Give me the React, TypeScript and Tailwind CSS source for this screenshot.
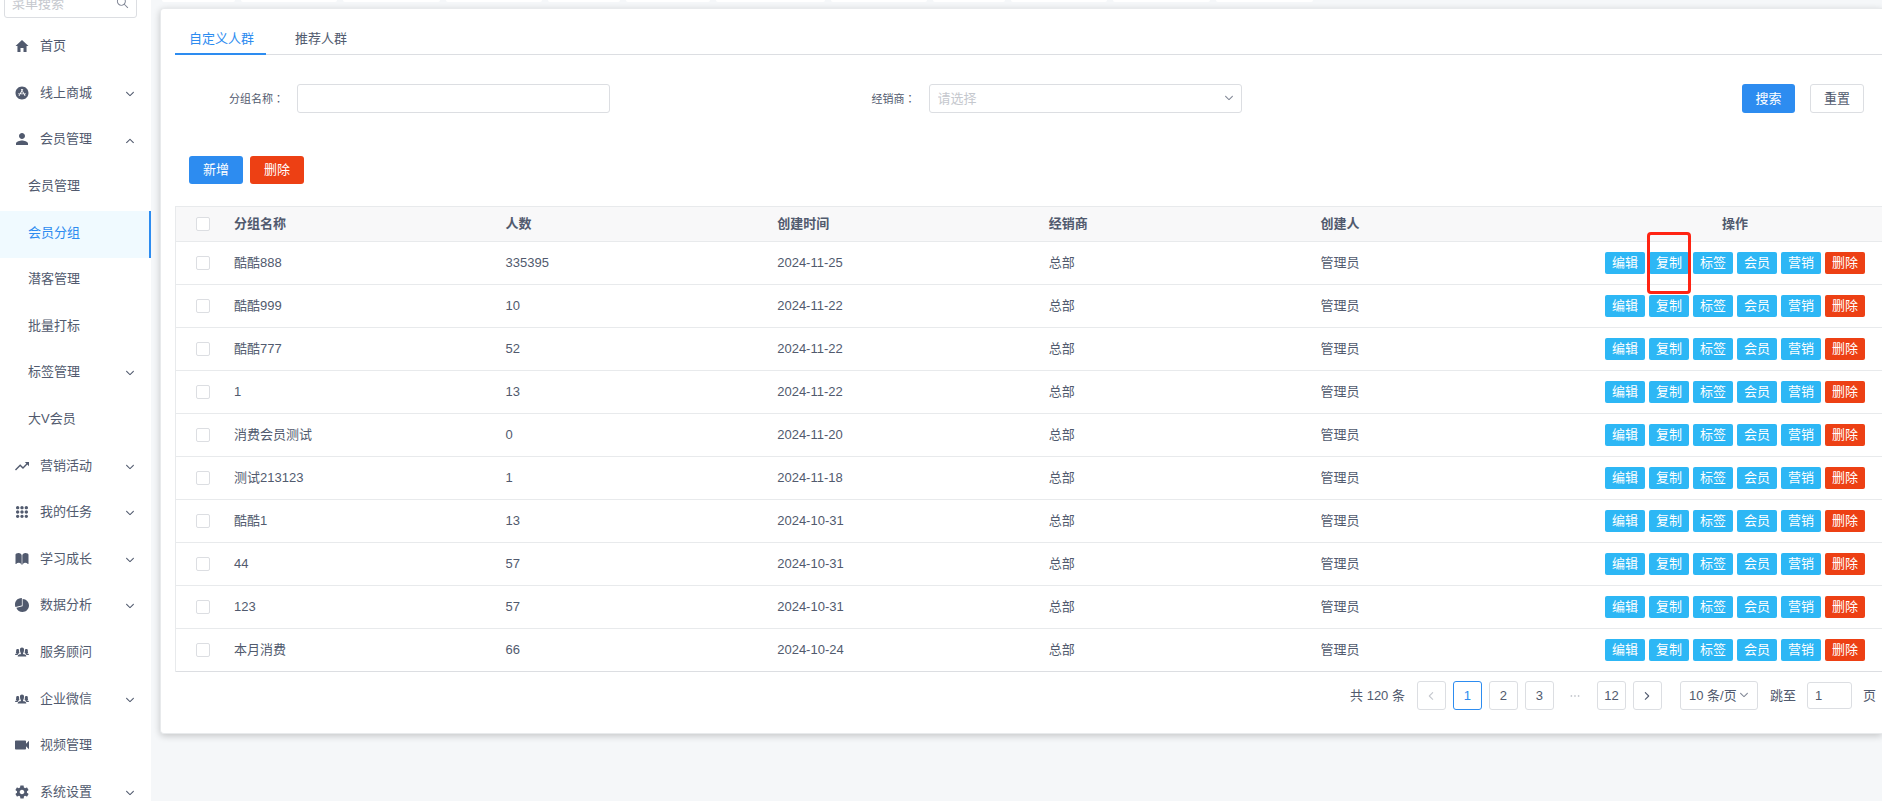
import { useState } from 'react';
import type { IconType } from 'react-icons';
import {
  IoIosAppstore,
  IoIosArrowBack,
  IoIosArrowDown,
  IoIosArrowForward,
  IoIosArrowUp,
  IoIosBook,
  IoIosKeypad,
  IoIosMore,
  IoIosPeople,
  IoIosPie,
  IoIosSearch,
  IoMdHome,
  IoMdPerson,
  IoMdSettings,
  IoMdTrendingUp,
  IoMdVideocam,
} from 'react-icons/io';

type MenuItem = {
  label: string;
  icon?: IconType;
  arrow?: 'up' | 'down';
  active?: boolean;
};

const menuItems: MenuItem[] = [
  { label: '首页', icon: IoMdHome },
  { label: '线上商城', icon: IoIosAppstore, arrow: 'down' },
  { label: '会员管理', icon: IoMdPerson, arrow: 'up' },
  { label: '会员管理' },
  { label: '会员分组', active: true },
  { label: '潜客管理' },
  { label: '批量打标' },
  { label: '标签管理', arrow: 'down' },
  { label: '大V会员' },
  { label: '营销活动', icon: IoMdTrendingUp, arrow: 'down' },
  { label: '我的任务', icon: IoIosKeypad, arrow: 'down' },
  { label: '学习成长', icon: IoIosBook, arrow: 'down' },
  { label: '数据分析', icon: IoIosPie, arrow: 'down' },
  { label: '服务顾问', icon: IoIosPeople },
  { label: '企业微信', icon: IoIosPeople, arrow: 'down' },
  { label: '视频管理', icon: IoMdVideocam },
  { label: '系统设置', icon: IoMdSettings, arrow: 'down' },
];

// widths of the opened page tags, only their lower edge shows
const openedTags = [73, 96, 97, 96, 72, 84, 109, 96, 72, 96, 97, 97];

const groups = [
  { id: 1, name: '酷酷888', count: 335395, created: '2024-11-25' },
  { id: 2, name: '酷酷999', count: 10, created: '2024-11-22' },
  { id: 3, name: '酷酷777', count: 52, created: '2024-11-22' },
  { id: 4, name: '1', count: 13, created: '2024-11-22' },
  { id: 5, name: '消费会员测试', count: 0, created: '2024-11-20' },
  { id: 6, name: '测试213123', count: 1, created: '2024-11-18' },
  { id: 7, name: '酷酷1', count: 13, created: '2024-10-31' },
  { id: 8, name: '44', count: 57, created: '2024-10-31' },
  { id: 9, name: '123', count: 57, created: '2024-10-31' },
  { id: 10, name: '本月消费', count: 66, created: '2024-10-24' },
];

const rowActions = ['编辑', '复制', '标签', '会员', '营销', '删除'];
const tabs = ['自定义人群', '推荐人群'];

const checkboxClass =
  'block size-[14px] mx-auto appearance-none rounded-xs border border-[#dcdee2] bg-white checked:border-[#2d8cf0] checked:bg-[#2d8cf0]';
const pageButtonClass =
  'flex h-[29px] w-[29px] items-center justify-center rounded-[3px] border bg-white';

function Sidebar() {
  return (
    <aside className="h-screen w-[151px] shrink-0 overflow-hidden bg-white">
      <div className="relative -mt-[11px] mr-[14px] ml-1">
        <input
          type="text"
          aria-label="菜单搜索"
          placeholder="菜单搜索"
          className="block h-[29px] w-full rounded-[3px] border border-[#dcdee2] px-[7px] outline-none placeholder:text-[#c5c8ce]"
        />
        <IoIosSearch className="absolute top-[6px] right-[7px] size-[15px] text-[#808695]" />
      </div>
      <nav className="mt-[7px]">
        <ul className="flex h-[792px] flex-col">
          {menuItems.map((item, i) => {
            const Icon = item.icon;
            return (
              <li key={i} className="flex-1">
                <a
                  href="#"
                  className={`flex h-full items-center pr-[15px] pb-1 ${Icon ? 'pl-[14px]' : 'pl-[28px]'} ${
                    item.active ? 'border-r-2 border-[#2d8cf0] bg-[#f0faff] text-[#2d8cf0]' : ''
                  }`}
                >
                  {Icon && <Icon className="mr-[10px] size-4" />}
                  <span>{item.label}</span>
                  {item.arrow === 'down' && <IoIosArrowDown className="mt-[2px] ml-auto size-3" />}
                  {item.arrow === 'up' && <IoIosArrowUp className="mt-1 ml-auto size-3" />}
                </a>
              </li>
            );
          })}
        </ul>
      </nav>
    </aside>
  );
}

function FieldLabel({ htmlFor, text }: { htmlFor: string; text: string }) {
  return (
    <label htmlFor={htmlFor} className="w-[122px] pr-[13px] text-right text-[11px]">
      {text}
      <span className="font-['Noto_Sans_CJK_TC',sans-serif]" lang="zh-TW">
        ：
      </span>
    </label>
  );
}

function SearchForm() {
  return (
    <form className="flex items-center pt-[29px]" onSubmit={(e) => e.preventDefault()}>
      <div className="flex w-[37%] items-center">
        <FieldLabel htmlFor="group-name" text="分组名称" />
        <input
          id="group-name"
          type="text"
          className="h-[29px] w-[313px] rounded-[3px] border border-[#dcdee2] px-[7px] outline-none"
        />
      </div>
      <div className="flex w-[37%] items-center">
        <FieldLabel htmlFor="dealer" text="经销商" />
        <div className="relative w-[313px]">
          <select
            id="dealer"
            defaultValue=""
            className="block h-[29px] w-full appearance-none rounded-[3px] border border-[#dcdee2] bg-white px-2 text-[#c5c8ce] outline-none"
          >
            <option value="">请选择</option>
            <option value="hq">总部</option>
          </select>
          <IoIosArrowDown className="pointer-events-none absolute top-2 right-[7px] size-3 text-[#808695]" />
        </div>
      </div>
      <div className="flex flex-1 justify-end gap-[15px] pr-[18px]">
        <button type="submit" className="h-[29px] w-[53px] rounded-[3px] bg-[#2d8cf0] text-white">
          搜索
        </button>
        <button type="reset" className="h-[29px] w-[54px] rounded-[3px] border border-[#dcdee2] bg-white">
          重置
        </button>
      </div>
    </form>
  );
}

function RowActions({ highlight }: { highlight: boolean }) {
  return (
    <div className="flex justify-center gap-1">
      {rowActions.map((action) => (
        <div key={action} className="relative">
          <button
            type="button"
            className={`block h-[22px] w-10 rounded-xs text-white ${
              action === '删除' ? 'bg-[#ed4014]' : 'bg-[#2db7f5]'
            }`}
          >
            {action}
          </button>
          {highlight && action === '复制' && (
            <span className="pointer-events-none absolute -inset-x-[2px] -inset-y-5 z-10 rounded border-3 border-[#ff2413]" />
          )}
        </div>
      ))}
    </div>
  );
}

function GroupTable() {
  return (
    <table className="mt-[22px] w-full table-fixed border-separate border-spacing-0 border-t border-l border-[#e8eaec] text-left">
      <thead className="bg-[#f8f8f9]">
        <tr className="*:h-[35px] *:border-b *:border-[#e8eaec] *:px-1 *:font-bold">
          <th className="w-[54px]">
            <input type="checkbox" aria-label="全选" className={checkboxClass} />
          </th>
          <th>分组名称</th>
          <th>人数</th>
          <th>创建时间</th>
          <th>经销商</th>
          <th>创建人</th>
          <th className="w-[294px] text-center">操作</th>
        </tr>
      </thead>
      <tbody>
        {groups.map((group, i) => (
          <tr
            key={group.id}
            className="*:h-[43px] *:border-b *:border-[#e8eaec] *:px-1 last:*:border-[#dcdee2]"
          >
            <td>
              <input type="checkbox" aria-label={group.name} className={checkboxClass} />
            </td>
            <td>{group.name}</td>
            <td>{group.count}</td>
            <td>{group.created}</td>
            <td>总部</td>
            <td>管理员</td>
            <td>
              <RowActions highlight={i === 0} />
            </td>
          </tr>
        ))}
      </tbody>
    </table>
  );
}

function Pagination() {
  const [page, setPage] = useState(1);

  const pageButton = (n: number) => (
    <button
      key={n}
      type="button"
      onClick={() => setPage(n)}
      className={`${pageButtonClass} ${n === page ? 'border-[#2d8cf0] text-[#2d8cf0]' : 'border-[#dcdee2]'}`}
    >
      {n}
    </button>
  );

  return (
    <div className="mt-[9px] flex items-center justify-end pr-[6px]">
      <span className="mr-3">共 120 条</span>
      <div className="flex gap-[7px]">
        <button type="button" aria-label="上一页" className={`${pageButtonClass} border-[#dcdee2] text-[#c5c8ce]`}>
          <IoIosArrowBack className="size-3" />
        </button>
        {[1, 2, 3].map(pageButton)}
        <span className="flex w-[29px] items-center justify-center text-[#c5c8ce]">
          <IoIosMore className="size-3" />
        </span>
        {pageButton(12)}
        <button type="button" aria-label="下一页" className={`${pageButtonClass} border-[#dcdee2]`}>
          <IoIosArrowForward className="size-3" />
        </button>
      </div>
      <div className="relative ml-[18px]">
        <select
          aria-label="每页条数"
          className="block h-[29px] w-[78px] appearance-none rounded-[3px] border border-[#dcdee2] bg-white pl-2 outline-none"
        >
          <option>10 条/页</option>
          <option>20 条/页</option>
        </select>
        <IoIosArrowDown className="pointer-events-none absolute top-2 right-2 size-3 text-[#808695]" />
      </div>
      <label className="ml-3 flex items-center">
        跳至
        <input
          type="text"
          defaultValue="1"
          className="mx-[11px] h-[27px] w-[45px] rounded-[3px] border border-[#dcdee2] px-[7px] outline-none"
        />
        页
      </label>
    </div>
  );
}

export default function App() {
  const [activeTab, setActiveTab] = useState(tabs[0]);

  return (
    <div className="flex h-screen overflow-hidden bg-[#f5f7f9] font-['Liberation_Sans','Noto_Sans_CJK_SC',sans-serif] text-[13px] leading-5 text-[#515a6e]">
      <Sidebar />
      <main className="min-w-0 flex-1 overflow-hidden pl-[9px]">
        <div className="flex h-2 gap-[6px] pl-[2px]">
          {openedTags.map((width, i) => (
            <div key={i} className="h-[2px] rounded-b-xs bg-white" style={{ width }} />
          ))}
        </div>
        <div className="rounded-l border-y border-l border-[#e8eaec] bg-white pb-[23px] pl-[14px] shadow-[0_2px_7px_rgba(0,0,0,0.2)]">
          <div role="tablist" className="flex gap-[15px] border-b border-[#dcdee2] pt-[14px]">
            {tabs.map((tab) => (
              <button
                key={tab}
                type="button"
                role="tab"
                aria-selected={tab === activeTab}
                onClick={() => setActiveTab(tab)}
                className={`-mb-px border-b-2 pt-[6px] pr-3 pb-1 pl-[14px] ${
                  tab === activeTab ? 'border-[#2d8cf0] text-[#2d8cf0]' : 'border-transparent'
                }`}
              >
                {tab}
              </button>
            ))}
          </div>
          <SearchForm />
          <div className="mt-[43px] ml-[14px] flex gap-[7px]">
            <button type="button" className="h-[28px] w-[54px] rounded-[3px] bg-[#2d8cf0] text-white">
              新增
            </button>
            <button type="button" className="h-[28px] w-[54px] rounded-[3px] bg-[#ed4014] text-white">
              删除
            </button>
          </div>
          <GroupTable />
          <Pagination />
        </div>
      </main>
    </div>
  );
}
